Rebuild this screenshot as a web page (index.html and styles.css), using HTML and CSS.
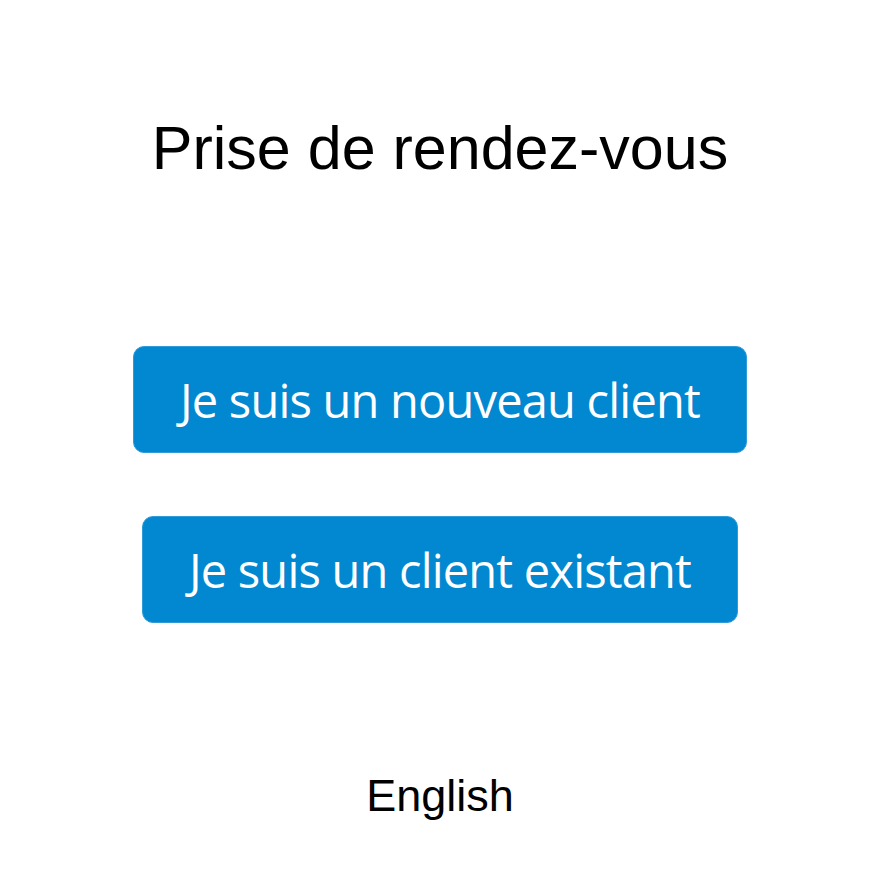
FILE: index.html
```html
<!DOCTYPE html>
<html lang="fr">
  <head>
    <meta charset="UTF-8" />
    <meta name="viewport" content="width=device-width, initial-scale=1.0" />
    <title>Prise de rendez-vous</title>
    <link rel="stylesheet" href="styles.css">
  </head>
  <body>
    <div id="booking-container">
      <h1 class="title">Prise de rendez-vous</h1>

      <div class="btnGroup">
        <button type="button" class="btnChoice">Je suis un nouveau client</button>
        <button type="button" class="btnChoice">Je suis un client existant</button>
      </div>

      <a href="#" class="lang">English</a>
    </div>
  </body>
</html>
```

FILE: styles.css
```css
body {
  margin: 0;
  padding: 0;
  background-color: #ffffff;
  font-family: "Liberation Sans", Arial, sans-serif;
  color: #000000;
}

#booking-container {
  display: flex;
  flex-direction: column;
  align-items: center;
  padding-top: 113px;
  padding-right: 3px;
}

.title {
  margin: 0;
  font-size: 61px;
  font-weight: normal;
  line-height: 70px;
}

.btnGroup {
  display: flex;
  flex-direction: column;
  align-items: center;
  gap: 63px;
  margin-top: 163px;
}

.btnChoice {
  padding: 24px 46px 22px;
  font-family: "Open Sans", "Noto Sans", sans-serif;
  font-size: 47px;
  letter-spacing: -0.8px;
  line-height: 59px;
  color: #ffffff;
  background-color: #0288d1;
  border: 1px solid #2f9bd8;
  border-radius: 11px;
  cursor: pointer;
}

.btnChoice:hover {
  background-color: #0277bd;
}

.lang {
  margin-top: 147px;
  font-size: 45px;
  line-height: 52px;
  color: #000000;
  text-decoration: none;
}
```
